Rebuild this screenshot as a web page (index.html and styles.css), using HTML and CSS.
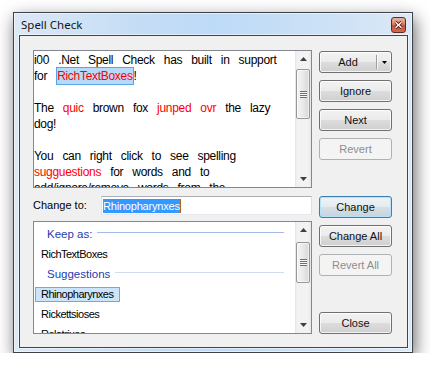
FILE: index.html
```html
<!DOCTYPE html>
<html lang="en">
<head>
  <meta charset="UTF-8" />
  <meta name="viewport" content="width=device-width, initial-scale=1.0"/>
  <title>Spell Check</title>
  <link rel="stylesheet" href="styles.css">
</head>
<body>
  <div class="window">
    <div class="titlebar">
      <span class="title">Spell Check</span>
      <span class="close">
        <svg width="9" height="8" viewBox="0 0 9 8">
          <path d="M1.5 1.2l6 5.6M7.5 1.2l-6 5.6" stroke="#4b1b12" stroke-width="3" fill="none"/>
          <path d="M1.5 1.2l6 5.6M7.5 1.2l-6 5.6" stroke="#fff" stroke-width="1.4" fill="none"/>
        </svg>
      </span>
    </div>

    <div class="client">
      <div class="row top">
        <div class="box textbox">
          <div class="text">
            i00 .Net Spell Check has built in support<br>
            for <span class="hl">RichTextBoxes</span>!<br>
            <br>
            The <span class="err">quic</span> brown fox <span class="err">junped ovr</span> the lazy<br>
            dog!<br>
            <br>
            You can right click to see spelling<br>
            <span class="err">sugguestions</span> for words and to<br>
            add/ignore/remove words from the
          </div>
          <div class="vscroll">
            <div class="sb-btn"><svg width="7" height="4"><polygon points="3.5,0 7,4 0,4" fill="#404040"/></svg></div>
            <div class="thumb thumb-text"><div class="grip"></div></div>
            <div class="sb-space"></div>
            <div class="sb-btn"><svg width="7" height="4"><polygon points="0,0 7,0 3.5,4" fill="#404040"/></svg></div>
          </div>
        </div>
        <div class="side">
          <div class="btn split">
            <span class="btn-label">Add</span>
            <span class="sep"></span>
            <span class="caret"><svg width="5" height="3"><polygon points="0,0 5,0 2.5,3" fill="#000"/></svg></span>
          </div>
          <div class="btn">Ignore</div>
          <div class="btn">Next</div>
          <div class="btn disabled">Revert</div>
        </div>
      </div>

      <div class="row change">
        <label class="label">Change to:</label>
        <div class="input"><span class="selected">Rhinopharynxes</span><span class="cursor"></span></div>
        <div class="btn default">Change</div>
      </div>

      <div class="row bottom">
        <div class="box listbox">
          <div class="items">
            <div class="group">Keep as:</div>
            <div class="item">RichTextBoxes</div>
            <div class="group light">Suggestions</div>
            <div class="item sel"><span>Rhinopharynxes</span></div>
            <div class="item">Rickettsioses</div>
            <div class="item">Relatrixes</div>
          </div>
          <div class="vscroll">
            <div class="sb-btn"><svg width="7" height="4"><polygon points="3.5,0 7,4 0,4" fill="#404040"/></svg></div>
            <div class="thumb thumb-list"><div class="grip"></div></div>
            <div class="sb-space"></div>
            <div class="sb-btn"><svg width="7" height="4"><polygon points="0,0 7,0 3.5,4" fill="#404040"/></svg></div>
          </div>
        </div>
        <div class="side">
          <div class="btn">Change All</div>
          <div class="btn disabled">Revert All</div>
          <div class="btn close-btn">Close</div>
        </div>
      </div>
    </div>
  </div>
</body>
</html>
```

FILE: styles.css
```css
body {
  margin: 0;
  background: #fff;
  font-family: "Liberation Sans", Arial, sans-serif;
}
.window {
  margin: 12px 0 0 13px;
  width: 400px;
  height: 341px;
  box-sizing: border-box;
  border: 1px solid #3e4247;
  background: linear-gradient(to right, #dbe8f6 0%, #c6ddf5 30%, #bddaf7 50%, #cce1f6 78%, #dbe9f7 100%);
  box-shadow: inset 0 0 0 1px rgba(255,255,255,0.55), 2px 6px 16px rgba(0,0,0,0.6);
  display: flex;
  flex-direction: column;
}
.titlebar {
  height: 22px;
  display: flex;
  align-items: center;
  padding: 0 6px 0 7px;
}
.title {
  font-family: "Noto Sans", sans-serif;
  font-size: 11.5px;
  color: #151515;
}
.close {
  margin-left: auto;
  align-self: flex-start;
  margin-top: 4px;
  width: 15px;
  height: 16px;
  box-sizing: border-box;
  border: 1px solid #5e2b20;
  border-radius: 3px;
  background: linear-gradient(#ebb3a2 0%, #da8169 45%, #c6543a 52%, #d6694d 100%);
  display: flex;
  align-items: center;
  justify-content: center;
}
.client {
  flex: 1;
  margin: 0 4px 4px 5px;
  border: 1px solid #454545;
  background: #f0f0f0;
  padding: 14px 0 0 13px;
  box-shadow: 0 0 0 1px rgba(255,255,255,0.5);
}
.row {
  display: flex;
  gap: 7px;
}
.box {
  box-sizing: border-box;
  width: 279px;
  border: 1px solid #828790;
  background: #fff;
  display: flex;
}
.textbox {
  height: 138px;
}
.text {
  flex: 1;
  overflow: hidden;
  white-space: nowrap;
  padding-top: 1px;
  font-size: 12px;
  line-height: 16px;
  letter-spacing: -0.3px;
  word-spacing: 6px;
  color: #000;
}
.err {
  color: #f00;
}
.hl {
  color: #f00;
  background: #b8d9f7;
  border: 1px solid #5ea2e6;
  padding: 1px 0;
}
.vscroll {
  width: 16px;
  display: flex;
  flex-direction: column;
  background: linear-gradient(to right, #e3e3e3 0, #f2f2f2 2px, #f3f3f3 13px, #e8e8e8 16px);
}
.sb-btn {
  height: 16px;
  display: flex;
  align-items: center;
  justify-content: center;
}
.sb-space {
  flex: 1;
}
.thumb {
  margin: 2px 1px 0 1px;
  box-sizing: border-box;
  border: 1px solid #979797;
  border-radius: 2px;
  background: linear-gradient(to right, #f4f4f4, #e9e9e9 50%, #d7d7d7);
  box-shadow: inset 0 0 0 1px rgba(255,255,255,0.6);
  display: flex;
  align-items: center;
  justify-content: center;
}
.thumb-text {
  height: 50px;
}
.thumb-list {
  margin-top: 4px;
  height: 41px;
}
.grip {
  width: 7px;
  height: 7px;
  background: repeating-linear-gradient(#6f6f6f 0 1px, #f8f8f8 1px 2px);
}
.side {
  width: 73px;
  display: flex;
  flex-direction: column;
  gap: 7px;
}
.top .side {
  padding-top: 1px;
}
.btn {
  box-sizing: border-box;
  width: 73px;
  height: 22px;
  border: 1px solid #707070;
  border-radius: 3px;
  background: linear-gradient(#f2f2f2 0%, #ebebeb 50%, #dddddd 50%, #cfcfcf 100%);
  box-shadow: inset 0 0 0 1px rgba(255,255,255,0.75);
  font-size: 11px;
  font-weight: 400;
  line-height: 20px;
  text-align: center;
  color: #111;
}
.btn.disabled {
  border-color: #adb2b5;
  background: #f4f4f4;
  box-shadow: none;
  color: #8d8d8d;
}
.btn.default {
  border-color: #3c7fb1;
  box-shadow: inset 0 0 0 1px #b4e2f8;
  background: linear-gradient(#eef3f6 0%, #e4ebf0 50%, #d5dfe6 50%, #c8d4dd 100%);
}
.split {
  display: flex;
  align-items: center;
}
.btn-label {
  flex: 1;
  text-align: center;
}
.sep {
  width: 1px;
  height: 14px;
  background: #9c9c9c;
  box-shadow: 1px 0 0 #fafafa;
}
.caret {
  width: 14px;
  display: flex;
  justify-content: center;
}
.change {
  margin-top: 8px;
  gap: 0;
}
.label {
  width: 68px;
  height: 19px;
  line-height: 19px;
  font-size: 11px;
  color: #000;
}
.input {
  box-sizing: border-box;
  width: 211px;
  height: 19px;
  padding: 1px;
  border: 1px solid;
  border-color: #abadb3 #dbdfe6 #e3e9ef #e2e3ea;
  background: #fff;
  display: flex;
  align-items: center;
}
.selected {
  background: #3399ff;
  color: #fff;
  font-size: 11px;
  letter-spacing: -0.2px;
  line-height: 14px;
}
.cursor {
  width: 1px;
  height: 14px;
  background: #b5651d;
}
.change .btn {
  margin-left: 7px;
}
.bottom {
  margin-top: 3px;
}
.listbox {
  height: 113px;
}
.items {
  flex: 1;
  overflow: hidden;
  padding-top: 2px;
}
.group {
  height: 20px;
  display: flex;
  align-items: center;
  padding: 0 11px 0 13px;
  font-size: 11.5px;
  color: #2440ad;
}
.group::after {
  content: "";
  flex: 1;
  height: 1px;
  margin: 0 0 4px 5px;
  background: #a3bbe6;
}
.group.light::after {
  background: #d0dcf0;
}
.item {
  height: 20px;
  display: flex;
  align-items: center;
  padding-left: 7px;
  font-size: 11px;
  letter-spacing: -0.5px;
  color: #000;
}
.item.sel span {
  margin-left: -6px;
  padding: 0 5px;
  line-height: 13px;
  border: 1px solid #6aaae8;
  background: #cde5fa;
}
.bottom .side {
  padding-top: 4px;
}
.close-btn {
  margin-top: auto;
}
```
